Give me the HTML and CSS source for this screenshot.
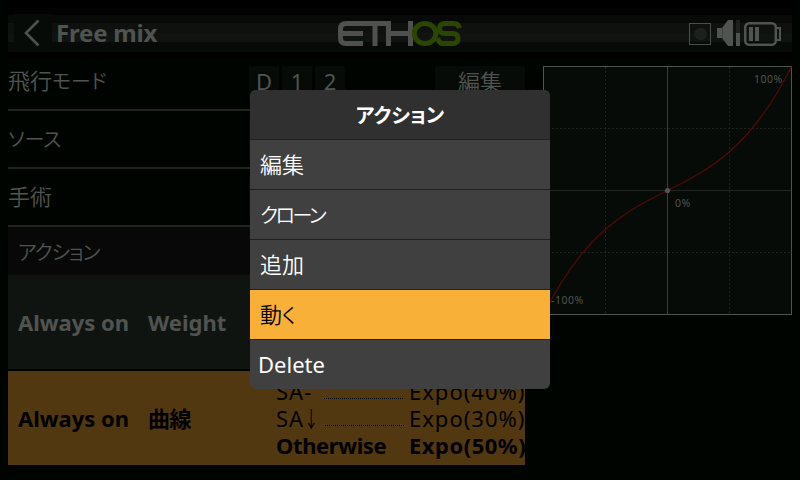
FILE: index.html
```html
<!DOCTYPE html>
<html lang="ja">
<head>
<meta charset="utf-8">
<title>Free mix</title>
<link rel="stylesheet" href="styles.css">
</head>
<body>
<header class="topbar">
  <div class="back"><svg width="38" height="38" viewBox="0 0 38 38"><path d="M24.5 6.500 12 19 24.500 31.500" fill="none" stroke="#4e524e" stroke-width="2.600"/></svg></div>
  <h1 class="title">Free mix</h1>
  <svg class="logo" width="126" height="28" viewBox="0 0 126 28" fill="none" stroke-width="5">
    <g stroke="#505050"><path d="M49 3.500H9Q3.500 3.500 3.500 9v9Q3.500 23.500 9 23.500H26M4 13.500H26M38 3.500V26M51.500 1V26M73.500 1V26M51.500 13.500H73.500"/></g>
    <g stroke="#2b4600"><ellipse cx="88" cy="13.500" rx="10.800" ry="10"/><path d="M122.500 8Q121 3.500 117 3.500H108Q102.500 3.500 102.500 8.500 102.500 13.500 108 13.500H115.500Q121 13.500 121 18.500 121 23.500 115.500 23.500H106Q102 23.500 100.500 18"/></g>
  </svg>
  <svg class="status" width="94" height="28" viewBox="0 0 94 28">
    <rect x="1.500" y="4.500" width="21" height="21" fill="none" stroke="#4b4f4b"/>
    <circle cx="12.500" cy="15" r="6.300" fill="#1d211d"/>
    <path d="M29 9h5L40 1h5v26h-5l-6-8h-5z" fill="#505450"/><path d="M34.500 9v10" stroke="#404440"/>
    <path d="M48 1h4v13h-4z" fill="#1d211d"/><path d="M48 14h4v13h-4z" fill="#505450"/>
    <rect x="57.200" y="4.200" width="30.600" height="21.600" rx="4" fill="none" stroke="#505450" stroke-width="2.500"/>
    <path d="M61 8h4v14h-4zM67 8h4v14h-4z" fill="#505450"/>
    <path d="M88 9h4v12h-4" fill="none" stroke="#505450" stroke-width="2"/>
  </svg>
</header>
<main class="content">
  <section class="panel">
    <div class="field"><span class="label">飛行<span class="kana">モード</span></span><div class="controls"><span class="btn">D</span><span class="btn">1</span><span class="btn">2</span><span class="btn edit">編集</span></div></div>
    <div class="field"><span class="label"><span class="kana">ソース</span></span><div class="controls"><span class="btn wide"></span></div></div>
    <div class="field"><span class="label">手術</span><div class="controls"><span class="btn wide"></span></div></div>
    <div class="thead"><span class="kana tight">アクション</span></div>
    <div class="entry"><span class="when">Always on</span><span class="what">Weight</span></div>
    <div class="entry selected">
      <span class="when">Always on</span><span class="what ja">曲線</span>
      <div class="cases">
        <div class="case"><span class="pos">SA-</span><i class="dots"></i><span class="val">Expo(40%)</span></div>
        <div class="case"><span class="pos low">SA<span class="arrow">↓</span></span><i class="dots"></i><span class="val">Expo(30%)</span></div>
        <div class="case other"><span>Otherwise</span><span class="val">Expo(50%)</span></div>
      </div>
    </div>
  </section>
  <svg class="graph" width="249" height="249" viewBox="0 0 249 249">
    <rect x=".5" y=".5" width="248" height="248" fill="#070b07" stroke="#505450"/>
    <path d="M62.500 1V248M186.500 1V248M1 62.500H248M1 186.500H248" stroke="#20241f" stroke-dasharray="2 2"/>
    <path d="M1 124.500H248" stroke="#232723"/>
    <path d="M124.500 1V249" stroke="#513810"/>
    <path d="M.5 248.500C83.200 83.200 165.800 165.800 248.500 .5" fill="none" stroke="#580808" stroke-width="1.200"/>
    <circle cx="124.500" cy="124.500" r="2.600" fill="#505450"/>
    <text x="211" y="17">100%</text><text x="132" y="141">0%</text><text x="8" y="238">-100%</text>
  </svg>
</main>
<div class="dialog">
  <div class="head"><span class="kana">アクション</span></div>
  <div class="item">編集</div>
  <div class="item"><span class="kana tighter">クローン</span></div>
  <div class="item">追加</div>
  <div class="item active">動<span class="kana">く</span></div>
  <div class="item latin">Delete</div>
</div>
</body>
</html>
```

FILE: styles.css
```css
* { box-sizing: border-box; }
body {
  margin: 0;
  width: 800px;
  height: 480px;
  overflow: hidden;
  background: #000400;
  color: #505450;
  font: 22px/30px "Noto Sans", "Noto Sans CJK JP", sans-serif;
  font-feature-settings: "palt";
}
.topbar {
  position: relative;
  display: flex;
  align-items: center;
  height: 58px;
  margin: 0 8px;
  padding: 8px 0 0 6px;
  background: linear-gradient(#000 0 8px, #020202 8px 15px, #070a07 15px 23px, #0f110f 23px 33px, #101410 33px 42px, #070a07 42px 52px, #000 52px);
}
.back { width: 38px; height: 38px; background: #070b07; }
.back svg { display: block; }
.title { margin: 0 0 0 4px; font-size: 24px; font-weight: 700; letter-spacing: -.2px; }
.logo { position: absolute; left: 329px; top: 20px; }
.status { position: absolute; left: 680px; top: 19px; }
.content { display: flex; gap: 18px; margin-left: 8px; }
.panel { width: 517px; }
.field {
  display: flex;
  height: 58px;
  border-bottom: 2px solid #20241f;
}
.field:first-child { height: 53px; }
.label { width: 241px; padding-top: 11px; font-family: "Noto Sans CJK JP", sans-serif; font-weight: 350; }
.field:first-child .label { padding-top: 6px; }
.kana { font-size: 20px; }
.tight { letter-spacing: -1.1px; }
.tighter { letter-spacing: -2.4px; }
.controls { display: flex; flex: 1; gap: 3px; padding-top: 8px; }
.btn { width: 30px; height: 35px; background: #070b07; text-align: center; line-height: 31px; }
.edit { width: 90px; margin-left: auto; font-weight: 350; }
.wide { flex: 1; height: 40px; }
.thead { height: 48px; padding: 8px 10px; background: #080808; font-family: "Noto Sans CJK JP", sans-serif; font-weight: 350; }
.entry {
  display: flex;
  align-items: center;
  height: 94px;
  padding-left: 10px;
  background: #101410;
  font-weight: 700;
  overflow: hidden;
  white-space: nowrap;
}
.when { flex: none; width: 130px; }
.what { flex: none; width: 128px; }
.ja { letter-spacing: -.4px; }
.selected { margin-top: 2px; background: #513810; color: #000; }
.cases { flex: none; font-weight: 400; letter-spacing: 1px; line-height: 27px; }
.case { display: flex; width: 250px; }
.pos { width: 47px; }
.low { width: 48px; }
.arrow { display: inline-block; letter-spacing: 0; transform: scaleX(.65); transform-origin: left; }
.dots { width: 80px; height: 1px; margin: 20px 0 0 1px; background: repeating-linear-gradient(90deg, #000 0 1px, transparent 1px 2px); }
.val { width: 117px; margin-left: auto; }
.other { font-weight: 700; letter-spacing: -.4px; }
.other .val { letter-spacing: .5px; }
.graph { margin-top: 8px; }
.graph text { fill: #505450; font: 10.5px "Noto Sans", sans-serif; letter-spacing: .5px; }
.dialog {
  position: absolute;
  left: 250px;
  top: 90px;
  width: 300px;
  height: 299px;
  border-radius: 6px;
  overflow: hidden;
  background: #404040;
  color: #fff;
}
.head, .item { height: 50px; border-bottom: 1px solid #202020; line-height: 47px; font-family: "Noto Sans CJK JP", sans-serif; }
.head { background: #303030; text-align: center; font-weight: 700; }
.item { padding-left: 10px; font-weight: 350; }
.active { background: #f8b038; color: #000; }
.latin { padding-left: 8px; border: 0; line-height: 49px; font-family: "Noto Sans", sans-serif; font-weight: 400; }
```
